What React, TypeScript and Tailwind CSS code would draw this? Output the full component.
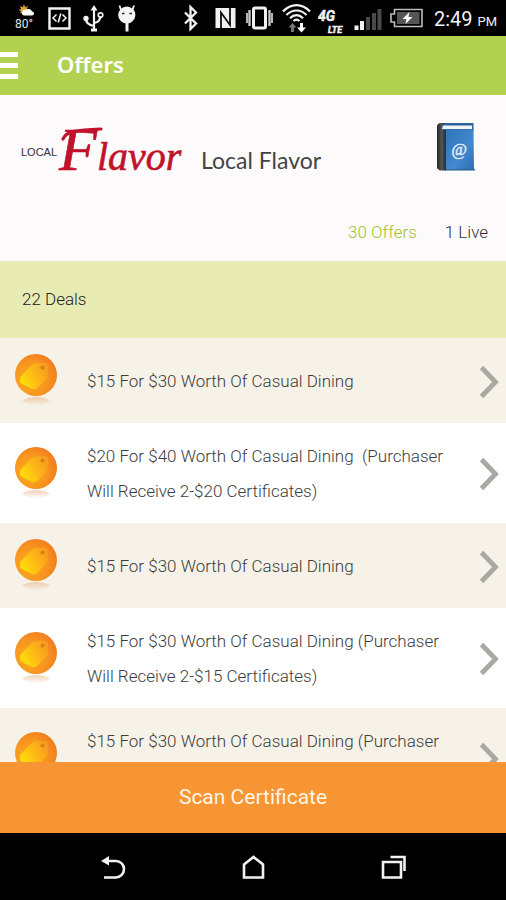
import type { ReactNode } from 'react';

const deals = [
  '$15 For $30 Worth Of Casual Dining',
  '$20 For $40 Worth Of Casual Dining  (Purchaser Will Receive 2-$20 Certificates)',
  '$15 For $30 Worth Of Casual Dining',
  '$15 For $30 Worth Of Casual Dining (Purchaser Will Receive 2-$15 Certificates)',
  '$15 For $30 Worth Of Casual Dining (Purchaser Will Receive 2-$15 Certificates)',
];

function StatusIcon({ width, children }: { width: number; children: ReactNode }) {
  return (
    <svg width={width} height="36" viewBox={`0 0 ${width} 36`} fill="none" stroke="#f2f2f2" aria-hidden="true">
      {children}
    </svg>
  );
}

function StatusBar() {
  return (
    <div className="flex h-9 shrink-0 items-center justify-between bg-black pl-[15px] pr-[9px] text-white">
      <div className="flex gap-3">
        {/* weather */}
        <StatusIcon width={21}>
          <g stroke="#e0a53a" strokeWidth="1.4">
            <circle cx="9" cy="10" r="2.6" fill="#e0a53a" />
            <path d="M9 5v2M4.500 10h1.500M5.500 6.500l1.500 1.500M12.500 6.500L11.500 7.500M5.500 13l1-1" />
          </g>
          <path d="M9 15.500h8a2 2 0 0 0 0-4 4 4 0 0 0-6.500-1.500A2.800 2.800 0 0 0 9 15.500z" fill="#fff" stroke="none" />
          <text x="0" y="28" fontSize="12" fill="#e5e5e5" stroke="none" className="font-['Roboto',sans-serif]">80°</text>
        </StatusIcon>
        {/* developer mode */}
        <StatusIcon width={23}>
          <path d="M1.500 8.500h20v20h-20z" strokeWidth="2.400" />
          <path d="M8.500 14.500l-3.500 3.500 3.500 3.500M14.500 14.500l3.500 3.500-3.500 3.500M12.800 13.500l-2.600 9" strokeWidth="1.600" />
        </StatusIcon>
        {/* usb */}
        <StatusIcon width={22}>
          <path d="M11 29V9M11 26c-6-1-8-3-8-7M11 23c5-1 6-3 6.500-7" strokeWidth="2.200" />
          <path d="M7.500 10.500L11 5l3.500 5.500z" fill="#f2f2f2" stroke="none" />
          <circle cx="3" cy="18.500" r="2.700" fill="#f2f2f2" stroke="none" />
          <circle cx="17.500" cy="15" r="2.300" strokeWidth="1.600" />
          <path d="M8 28.500h6v3H8z" fill="#f2f2f2" stroke="none" />
        </StatusIcon>
        {/* android head */}
        <StatusIcon width={20}>
          <path d="M4 10L2.500 5.500M15.500 10L17 5.500" strokeWidth="1.800" />
          <circle cx="9.800" cy="15" r="8.600" fill="#f4f4f4" stroke="none" />
          <path d="M10 23v8.500" strokeWidth="3" />
          <path d="M5 13.500h2.500M12.500 13.500h2.500" stroke="#222" strokeWidth="1.500" />
        </StatusIcon>
      </div>

      <div className="flex items-center gap-1.5">
        {/* bluetooth */}
        <StatusIcon width={24}>
          <path d="M1 12.500l11 11-5.500 5.500V7l5.500 5.500-11 11" strokeWidth="2.300" />
        </StatusIcon>
        {/* nfc */}
        <StatusIcon width={26}>
          <path d="M1.500 8h20v20h-20z" fill="#f2f2f2" stroke="none" />
          <path d="M7 28V12.500l9 12.500V8" stroke="#111" strokeWidth="1.800" />
        </StatusIcon>
        {/* vibrate */}
        <StatusIcon width={30}>
          <rect x="7.500" y="8" width="12" height="20" rx="1.500" strokeWidth="3" />
          <path d="M3.500 10v16M23.500 10v16" stroke="#c8c8c8" strokeWidth="2.400" />
          <path d="M1 13v10M26 13v10" stroke="#c8c8c8" strokeWidth="1.800" />
        </StatusIcon>
        {/* wifi */}
        <StatusIcon width={30}>
          <g strokeWidth="2.200">
            <path d="M1 11.500c8-8.500 19-8.500 27 0" />
            <path d="M4.500 15c6-6 14-6 20 0" />
            <path d="M8 18.200c4-4 9-4 13 0" />
            <path d="M11.500 21c2-1.800 4-1.800 6 0" />
          </g>
          <path d="M10.500 23l4 4.500h-2.500V32H9v-4.500H6.500z" fill="#777" stroke="none" />
          <path d="M19.500 32.500l-4.500-5h3V23h3v4.500h3z" fill="#fff" stroke="none" />
        </StatusIcon>
        {/* network type */}
        <StatusIcon width={30}>
          <g fill="#f2f2f2" className="font-['Roboto',sans-serif] font-bold italic" strokeWidth="0.500">
            <text x="0" y="21" fontSize="14">4G</text>
            <text x="10" y="33" fontSize="9">LTE</text>
          </g>
        </StatusIcon>
        {/* signal */}
        <StatusIcon width={30}>
          <path d="M2.500 30v-4.500M8 30v-9" strokeWidth="4" />
          <path d="M14 30V17M20 30V13M25.500 30V9" stroke="#4a4a4a" strokeWidth="4" />
        </StatusIcon>
        {/* battery */}
        <StatusIcon width={38}>
          <path d="M4.500 9.500h27.500v17H4.500v-4.500H1v-8h3.500z" stroke="#bdbdbd" strokeWidth="1.600" />
          <path d="M7 12h22.500v12H7z" fill="#555" stroke="none" />
          <path d="M19.500 12l-7 7h4l-1 5 7-7h-4z" fill="#fff" stroke="none" />
        </StatusIcon>
        <span className="whitespace-nowrap pt-1 font-['Roboto',sans-serif] text-xl leading-8 text-[#f2f2f2]">
          2:49 <span className="text-[13px]">PM</span>
        </span>
      </div>
    </div>
  );
}

function Header() {
  return (
    <header className="flex h-[59px] shrink-0 items-center bg-[#b2d150]">
      <button type="button" aria-label="Menu" className="flex w-[18px] flex-col gap-1.5">
        <span className="h-[5px] bg-white" />
        <span className="h-[5px] bg-white" />
        <span className="h-[5px] bg-white" />
      </button>
      <h1 className="ml-[39px] pb-1 font-['Noto_Sans',sans-serif] text-[22px] font-semibold leading-8 text-white">Offers</h1>
    </header>
  );
}

function Logo() {
  return (
    <svg width="166" height="60" viewBox="0 0 166 60" overflow="visible" role="img" aria-label="Local Flavor">
      <text x="1" y="36" fontSize="11" fill="#333" className="font-['Liberation_Sans',sans-serif]">LOCAL</text>
      <text x="39" y="50" fontSize="40" fill="#c1122c" stroke="#c1122c" strokeWidth="0.600" className="font-['Liberation_Serif',serif] italic">
        <tspan fontSize="62">F</tspan>lavor
      </text>
      <path d="M43 19c3-8 14-9 38-10" fill="none" stroke="#c1122c" strokeWidth="3.200" strokeLinecap="round" />
    </svg>
  );
}

function BookIcon() {
  return (
    <svg width="40" height="50" viewBox="0 0 40 50" aria-hidden="true">
      <defs>
        <linearGradient id="cover" x1="0" y1="0" x2="1" y2="1">
          <stop offset="0" stopColor="#2f74b8" />
          <stop offset="0.600" stopColor="#4289cf" />
          <stop offset="1" stopColor="#2c6cb2" />
        </linearGradient>
        <linearGradient id="spine" x1="0" x2="1">
          <stop offset="0" stopColor="#222" />
          <stop offset="0.500" stopColor="#555" />
          <stop offset="1" stopColor="#2c2c2c" />
        </linearGradient>
      </defs>
      <path d="M4 1h33.500v8H4z" fill="#2b629c" />
      <path d="M7 3.500h29V7H6z" fill="#f1f4f7" />
      <path d="M9 7.500h28.500l.5 39 1 1.500H9z" fill="url(#cover)" />
      <path d="M5 1C2 1 1 3 1 5v40c0 2 2 3.500 4 3.500h5V8H6c-1.500-1-1-4 1.500-5.500L9 1z" fill="url(#spine)" />
      <path d="M9 48h30" stroke="#24588f" />
      <text x="23" y="33" fontSize="17" textAnchor="middle" fill="#e6f0fa" stroke="#e6f0fa" strokeWidth="0.400" className="font-['Liberation_Serif',serif] italic">@</text>
    </svg>
  );
}

function Merchant() {
  return (
    <section className="flex h-[166px] shrink-0 flex-col justify-between bg-[#fcfafb] pb-[13px] pl-5 pr-[18px] pt-[25px]">
      <div className="flex items-start">
        <Logo />
        <h2 className="ml-[15px] mt-6 font-['Lato',sans-serif] text-[23px] leading-8 text-[#444]">Local Flavor</h2>
        <button type="button" aria-label="Contacts" className="ml-auto mr-3 mt-[2px]">
          <BookIcon />
        </button>
      </div>
      <div className="flex justify-end gap-7 font-['Roboto',sans-serif] text-[17px] font-light leading-8">
        <a href="#offers" className="text-[#a3c22e]">30 Offers</a>
        <a href="#live" className="text-[#333]">1 Live</a>
      </div>
    </section>
  );
}

function CoinIcon() {
  return (
    <svg width="42" height="55" viewBox="0 0 42 55" className="shrink-0" aria-hidden="true">
      <defs>
        <radialGradient id="coin" cx="0.350" cy="0.600" r="0.700">
          <stop offset="0" stopColor="#fbb01c" />
          <stop offset="0.600" stopColor="#f8941f" />
          <stop offset="1" stopColor="#f07a1e" />
        </radialGradient>
        <linearGradient id="tag" x1="0" y1="0.700" x2="1" y2="0.200">
          <stop offset="0" stopColor="#ffe008" />
          <stop offset="0.450" stopColor="#fdbd15" />
          <stop offset="1" stopColor="#f79a1f" />
        </linearGradient>
        <linearGradient id="shade" x1="0" y1="0" x2="0" y2="1">
          <stop offset="0" stopColor="#e8a878" stopOpacity="0.550" />
          <stop offset="1" stopColor="#e8b58a" stopOpacity="0" />
        </linearGradient>
      </defs>
      <path d="M7 46Q21 40 35 46Q29 52 21 52Q13 52 7 46z" fill="url(#shade)" />
      <circle cx="21" cy="21" r="21" fill="url(#coin)" />
      <path d="M6 22L17 11q2-2 5-2h8q3 0 3 3v8q0 3-2 5L22 34q-2 2-5 1l-10-5q-2-1-2-4 0-3 1-4z" fill="url(#tag)" />
      <circle cx="27.500" cy="13.500" r="2" fill="#dc7a1c" />
    </svg>
  );
}

function DealRow({ title }: { title: string }) {
  return (
    <li className="odd:bg-[#f6f2e7] even:bg-white">
      <a href="#deal" className="flex min-h-[85px] items-center pb-[14px] pl-[15px] pr-[7px] pt-4">
        <CoinIcon />
        <span className="ml-[30px] mr-5 flex-1 whitespace-pre-wrap font-['Roboto',sans-serif] text-[17px] font-light leading-[35px] text-[#3c3c3c]">
          {title}
        </span>
        <svg width="20" height="34" viewBox="0 0 20 34" fill="none" className="shrink-0" aria-hidden="true">
          <path d="M2.500 2.500L16.500 17 2.500 31.500" stroke="#a9a9a4" strokeWidth="4.800" />
        </svg>
      </a>
    </li>
  );
}

function NavBar() {
  return (
    <nav className="flex h-[67px] shrink-0 items-center justify-center gap-[114px] bg-black">
      <button type="button" aria-label="Back">
        <svg width="26" height="26" viewBox="0 0 26 26" fill="none" stroke="#f2f2f2" strokeWidth="2.600">
          <path d="M4 23.500h12c4.500 0 8-4 8-8.500s-3.500-8-8-8H7" />
          <path d="M9 2v9.500L1 7z" fill="#f2f2f2" stroke="none" />
        </svg>
      </button>
      <button type="button" aria-label="Home">
        <svg width="26" height="26" viewBox="0 0 26 26" fill="none" stroke="#f2f2f2" strokeWidth="2.600">
          <path d="M4 10.500L13.500 3l9.500 7.500v13H4z" />
        </svg>
      </button>
      <button type="button" aria-label="Recent apps">
        <svg width="26" height="26" viewBox="0 0 26 26" fill="none" stroke="#f2f2f2" strokeWidth="2.600">
          <path d="M3 8h18v15.500H3z" />
          <path d="M10.500 3h14v14" />
        </svg>
      </button>
    </nav>
  );
}

export default function App() {
  return (
    <div className="flex h-screen flex-col overflow-hidden bg-white">
      <StatusBar />
      <Header />
      <Merchant />
      <div className="flex h-[77px] shrink-0 items-center bg-[#e8ecb4] px-[22px] font-['Roboto',sans-serif] text-[17px] font-light text-[#222]">
        22 Deals
      </div>
      <ul className="min-h-0 flex-1 overflow-hidden">
        {deals.map((title, index) => (
          <DealRow key={index} title={title} />
        ))}
      </ul>
      <button
        type="button"
        className="h-[71px] shrink-0 bg-[#f79433] font-['Roboto',sans-serif] text-[21px] text-[#fff4e4]"
      >
        Scan Certificate
      </button>
      <NavBar />
    </div>
  );
}
